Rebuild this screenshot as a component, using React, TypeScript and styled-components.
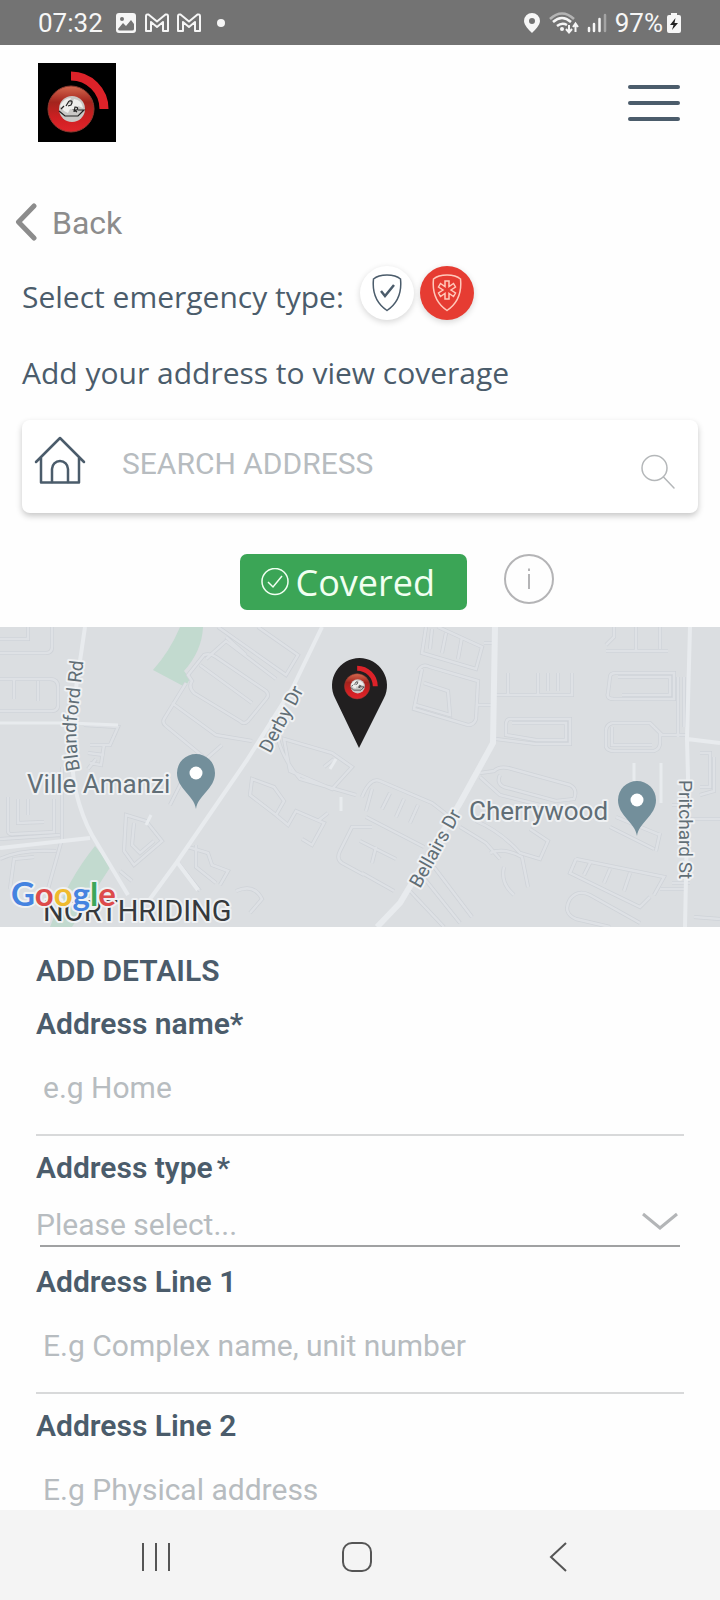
import React from "react";
import styled, { createGlobalStyle } from "styled-components";

const GlobalStyle = createGlobalStyle`
  *, *::before, *::after { box-sizing: border-box; }
  body { margin: 0; background: #fefefe; }
  button, input, select { font: inherit; color: inherit; }
  button { margin: 0; padding: 0; border: 0; background: none; cursor: pointer; }
  svg { display: block; flex: none; }
`;

const SLATE = "#4b5c6b";
const HINT = "#b7bcc0";

const Screen = styled.div`
  display: flex;
  flex-direction: column;
  height: 100vh;
  background: #fefefe;
  font-family: Roboto, "Liberation Sans", sans-serif;
  color: ${SLATE};
`;

const StatusBar = styled.div`
  flex: none;
  display: flex;
  align-items: center;
  justify-content: space-between;
  height: 45px;
  padding: 0 38px;
  background: #737373;
  color: #f6f6f6;
  font-size: 26px;
  line-height: 30px;
`;

const StatusGroup = styled.div<{ $gap: number }>`
  display: flex;
  align-items: center;
  gap: ${(p) => p.$gap}px;
`;

const Clock = styled.span`
  margin-right: 4px;
`;

const Content = styled.main`
  flex: 1;
  min-height: 0;
  overflow-y: auto;
  scrollbar-width: none;
`;

const Header = styled.header`
  display: flex;
  align-items: center;
  justify-content: space-between;
  padding: 18px 40px 0 38px;
`;

const MenuButton = styled.button`
  display: flex;
  flex-direction: column;
  gap: 12px;
  width: 52px;
`;

const MenuLine = styled.span`
  height: 4px;
  border-radius: 2px;
  background: ${SLATE};
`;

const BackLink = styled.a`
  display: inline-flex;
  align-items: center;
  gap: 15px;
  margin: 58px 0 0 15px;
  color: #8c8c8c;
  font-size: 32px;
  line-height: 40px;
  text-decoration: none;
`;

const BackText = styled.span`
  padding-top: 3px;
`;

const Intro = styled.section`
  padding: 20px 22px 0;
  font-family: "Open Sans", "Noto Sans", sans-serif;
  font-size: 30px;
  line-height: 40px;
`;

const TypeRow = styled.div`
  display: flex;
  align-items: flex-start;
  gap: 6px;
`;

const TypeLabel = styled.span`
  padding: 11px 10px 0 0;
`;

const TypeButton = styled.button<{ $active?: boolean }>`
  display: flex;
  align-items: center;
  justify-content: center;
  width: 54px;
  height: 54px;
  border-radius: 50%;
  background: ${(p) => (p.$active ? "#e63c32" : "#fff")};
  color: ${(p) => (p.$active ? "#ffc9bb" : SLATE)};
  box-shadow: 0 2px 6px rgba(0, 0, 0, 0.16);
`;

const Paragraph = styled.p`
  margin: 33px 0 0;
`;

const SearchBox = styled.form`
  display: flex;
  align-items: center;
  height: 93px;
  margin: 27px 22px 0;
  padding: 0 22px 12px 12px;
  border-radius: 8px;
  background: #fff;
  box-shadow: 0 3px 6px rgba(0, 0, 0, 0.22);
`;

const SearchInput = styled.input`
  flex: 1;
  min-width: 0;
  height: 48px;
  margin: 6px 0 0 36px;
  padding: 0;
  border: 0;
  outline: 0;
  background: transparent;
  font-size: 30px;
  &::placeholder { color: ${HINT}; opacity: 1; }
`;

const SearchButton = styled.button`
  margin-top: 24px;
`;

const CoverageRow = styled.div`
  display: flex;
  justify-content: center;
  align-items: flex-start;
  gap: 36px;
  padding: 41px 0 17px 74px;
`;

const CoveredBadge = styled.button`
  display: flex;
  align-items: center;
  gap: 6px;
  width: 227px;
  height: 56px;
  padding: 2px 0 0 20px;
  border-radius: 7px;
  background: #3ba556;
  color: #f1fff1;
  font-family: "Open Sans", "Noto Sans", sans-serif;
  font-size: 36px;
  line-height: 48px;
`;

const MapPanel = styled.section`
  height: 300px;
  background: #dbdee1;
  & > svg { width: 100%; height: 100%; }
`;

const MapText = styled.text<{ $size: number; $color?: string }>`
  font-size: ${(p) => p.$size}px;
  fill: ${(p) => p.$color || "#616e76"};
  stroke: #eff1f3;
  stroke-width: 4px;
  stroke-linejoin: round;
  paint-order: stroke;
`;

const GoogleMark = styled(MapText)`
  font-family: Lato, sans-serif;
  font-weight: 700;
`;

const Details = styled.form`
  display: flex;
  flex-direction: column;
  gap: 14px;
  padding: 26px 36px 0;
  font-size: 30px;
  line-height: 36px;
`;

const Title = styled.h2`
  margin: 0 0 3px;
  font-size: 30px;
  font-weight: 600;
  line-height: 36px;
`;

const Field = styled.div`
  display: flex;
  flex-direction: column;
`;

const Label = styled.label`
  font-weight: 600;
`;

const Star = styled.span`
  margin-left: 4px;
  font-weight: 500;
`;

const TextInput = styled.input`
  width: 100%;
  height: 94px;
  padding: 0 7px;
  border: 0;
  border-bottom: 2px solid #d8d9da;
  border-radius: 0;
  outline: 0;
  background: transparent;
  &::placeholder { color: ${HINT}; opacity: 1; }
`;

const SelectWrap = styled.div`
  display: flex;
  align-items: center;
  height: 61px;
  margin-bottom: 3px;
  padding: 12px 6px 0 0;
  background: linear-gradient(#a0a1a2, #a0a1a2) center bottom / calc(100% - 8px) 2px no-repeat;
`;

const Select = styled.select`
  flex: 1;
  height: 44px;
  padding: 6px 0 0;
  border: 0;
  outline: 0;
  appearance: none;
  background: transparent;
  color: ${HINT};
`;

const NavBar = styled.nav`
  flex: none;
  display: flex;
  align-items: center;
  justify-content: space-around;
  height: 90px;
  padding: 4px 62px 0 56px;
  background: #f4f4f4;
`;

const NavButton = styled.button`
  display: flex;
  justify-content: center;
  width: 60px;
`;

function BrandMark() {
  return (
    <>
      <path d="M33 13 A33 33 0 0 1 66 46" fill="none" stroke="#dc2229" strokeWidth="9" />
      <circle cx="33" cy="46" r="23" fill="url(#ring)" stroke="#8e3a30" strokeWidth="1" />
      <circle cx="34" cy="46" r="13" fill="#c9c8c6" />
      <path d="M22 43 q4 -8 11 -8 l-3 6 4 -1 2 -4 q8 1 9 9 l-5 -2 -3 4 -5 -1 -2 4 -4 -2z" fill="#eeeeec" />
      <path d="M21 48 l6 5 h13 l6 -6 h-6 M31 38 l-3 5 M31 38 q5 -1 2 4 l-3 1 M36 49 l1 -5 q4 0 2 3 l-3 0 3 2 M23 46 l3 -3" fill="none" stroke="#222" strokeWidth="1.200" />
    </>
  );
}

function Gradients() {
  return (
    <defs>
      <linearGradient id="ring" x1="0" y1="0" x2="0" y2="1">
        <stop offset="0" stopColor="#d5694f" />
        <stop offset="0.35" stopColor="#a3241d" />
        <stop offset="0.7" stopColor="#cf1f22" />
        <stop offset="1" stopColor="#e0252b" />
      </linearGradient>
    </defs>
  );
}

function MailIcon() {
  return (
    <svg width="24" height="20" viewBox="0 0 24 20" fill="none" stroke="#f6f6f6" strokeWidth="2" strokeLinejoin="round">
      <path d="M1 18 V3 Q1 1 3.500 1.500 L12 8.500 L20.500 1.500 Q23 1 23 3 V18 H18 V9 L12 14 L6 9 V18 Z" />
    </svg>
  );
}

const SHIELD = "M15 1 C20 1 25 2 28.500 5 C30 19 26 29 15 36.500 C4 29 0 19 1.500 5 C5 2 10 1 15 1 Z";

const MINOR = [
  "M0 12 H28 V0 M52 0 V20 Q52 26 46 26 H0 M0 52 H50 Q58 52 58 60 V78 Q58 84 52 84 H0 M14 52 V72 M38 54 V74",
  "M8 170 V204 Q8 208 14 207 L54 205 V172 M18 172 V196 L44 195 M28 172 V188 M62 140 V212 L48 262 M0 232 Q20 222 56 224 M10 262 L14 232 L34 230 M0 212 L60 208",
  "M84 98 L118 100 L110 118 H90 M104 118 L101 138 L90 136 M88 126 L104 128 M96 132 L88 142",
  "M126 188 L124 224 L134 238 L162 214 L146 194 Z M134 196 L132 218 L140 226 L154 214 M120 244 L132 254 M170 178 L184 150",
  "M186 56 L164 92 Q162 96 166 99 L206 132 L222 118 M172 76 L216 108 L252 114 M206 132 L186 148 M188 48 L204 28 Q210 26 216 30 L266 64 Q270 68 266 72 L248 94 Q244 98 240 94 L194 66 Q188 60 192 54 Z",
  "M218 0 L286 48 L298 28 L258 0 M206 32 L226 14 L276 52 M200 38 L252 76 M226 10 L246 28",
  "M284 112 L332 126 L352 140 L332 162 L290 144 Z M278 112 Q284 134 300 152 L356 168 M324 140 L334 132 M252 152 L250 168 L276 188 L284 174 L274 160 Z M276 188 L288 198 L296 184 L324 196 L312 218 L302 212 M318 194 L328 186",
  "M340 224 L352 200 H372 M340 224 Q336 232 342 236 L364 248 M188 220 L208 226 L212 238 L228 244 L220 258 M178 236 L200 264 M196 218 V240 L216 256 M236 264 Q254 256 262 272 L250 286",
  "M362 170 Q370 150 380 154 L432 176 L450 190 M366 190 L424 220 M372 162 L366 184 M390 166 L382 182 M404 172 L396 190 M418 178 L410 196 M360 214 L396 232 M376 220 L372 236 M362 246 L394 264 M420 246 L460 296 M434 240 L472 290 M410 264 L444 300",
  "M426 0 L422 26 L476 42 L482 20 L438 0 M432 2 L430 22 M446 6 L442 26 M462 10 L458 32 M418 44 Q422 36 430 40 L478 54 L476 92 Q474 98 468 98 L414 82 L422 42 M424 56 L448 64 L450 88 L416 78 M476 78 H494 M484 16 H494",
  "M496 68 H572 V46 M508 46 V68 M538 46 V68 M548 46 V64 M558 46 V64 M496 112 L536 117 H570 V92 H510 Q506 92 506 98 V108 L536 113 H566 V96 H512",
  "M606 24 H668 M636 0 V24 M660 0 V22 M614 0 V10 L606 18 M616 46 H674 V72 H614 Q606 72 608 66 L610 50 Q610 46 616 46 M618 50 H670 V68 H622 M612 96 H650 L662 108 H686 M612 96 Q606 98 606 104 V120 Q608 124 614 124 H654 Q660 122 660 116 V106 M612 100 V118 H652 M678 50 V110 M684 50 V100",
  "M480 146 L494 144 Q500 138 512 142 L570 158 Q578 162 574 172 L556 174 L504 160 Q496 156 500 148 M480 150 L500 168 L540 178 M460 200 Q470 206 486 216 L500 232 M476 194 Q500 204 520 226 L540 232 L548 214 L530 202",
  "M576 232 L570 246 L640 280 L650 270 M576 232 L664 250 L654 268 M590 236 L584 248 M610 242 L604 256 M630 246 L624 264 M610 200 L654 222 M660 206 L656 224 M616 190 L660 208 M570 272 Q578 262 590 268 L640 296 M570 272 Q562 286 576 292 L610 300",
  "M700 126 H710 V160 H700 M714 130 V164 L700 168 M690 192 H720 M672 178 H690 M672 256 H690 M660 262 H686 M694 290 L720 292 M490 226 Q504 220 522 230 L528 260 M504 240 Q500 256 514 268",
];

function PlacePin({ x, y }: { x: number; y: number }) {
  return (
    <g transform={`translate(${x} ${y})`}>
      <path d="M0 36 C-2 22 -19 16 -19 0 A19 19 0 0 1 19 0 C19 16 2 22 0 36 Z" fill="#738f9b" />
      <circle r="6.500" fill="#fff" />
    </g>
  );
}

function AreaMap() {
  return (
    <MapPanel aria-label="Map of the address">
      <svg viewBox="0 0 720 300" preserveAspectRatio="xMidYMid slice">
        <path d="M180 0 H203 Q202 24 184 44 L190 52 L185 60 L153 43 Q170 24 180 0 Z" fill="#c2dacf" />
        <path d="M95 219 L111 239 Q96 262 72 300 H50 Q68 252 95 219 Z" fill="#c2dacf" />
        <g fill="none" stroke="#cfd3d8" strokeWidth="4">
          {MINOR.map((d) => <path key={d} d={d} />)}
        </g>
        <g fill="none" stroke="#dee1e5" strokeWidth="2.500">
          {MINOR.map((d) => <path key={d} d={d} />)}
        </g>
        <g fill="none" stroke="#e8ebee" strokeWidth="4" strokeLinejoin="round">
          <path d="M85 0 L80 34 Q66 120 76 165 Q82 190 92 208 L128 268 M0 221 L90 211" />
          <path d="M0 96 H70 L118 98" strokeWidth="3" />
          <path d="M322 0 L293 60 L247 133 L177 235 L150 272 M177 235 L198 263" />
          <path d="M690 0 L687 112 L688 150 L685 300 M687 112 L720 116" />
          <path d="M146 198 L151 188 M330 142 L336 132 M341 170 V184 M634 136 V156 M661 136 V176" strokeWidth="3" />
        </g>
        <path d="M495 0 L493 116 L460 176 L400 276 L377 300" fill="none" stroke="#e8ebee" strokeWidth="6" />

        <path id="blandford" d="M80 143 Q74 112 78 84 L84 30" fill="none" />
        <MapText $size={19}><textPath href="#blandford">Blandford Rd</textPath></MapText>
        <MapText $size={19} transform="translate(270 127) rotate(-62)">Derby Dr</MapText>
        <MapText $size={19} transform="translate(420 262) rotate(-61)">Bellairs Dr</MapText>
        <MapText $size={19} transform="translate(679 153) rotate(90)">Pritchard St</MapText>
        <MapText $size={26} x="27" y="166">Ville Amanzi</MapText>
        <MapText $size={26} x="469" y="193">Cherrywood</MapText>
        <MapText $size={29} $color="#36393c" x="43" y="294">NORTHRIDING</MapText>
        <GoogleMark $size={33} x="11" y="279">
          <tspan fill="#4583e0">G</tspan>
          <tspan fill="#dd4b4b">o</tspan>
          <tspan fill="#efba2e">o</tspan>
          <tspan fill="#4583e0">g</tspan>
          <tspan fill="#3da658">l</tspan>
          <tspan fill="#dd4b4b">e</tspan>
        </GoogleMark>

        <PlacePin x={196} y={146} />
        <PlacePin x={637} y={173} />
        <path d="M359 121 L335 71 A27.500 27.500 0 1 1 384 71 Z" fill="#211f20" />
        <g transform="translate(339 34) scale(0.550)"><BrandMark /></g>
      </svg>
    </MapPanel>
  );
}

export default function App() {
  return (
    <Screen>
      <GlobalStyle />
      <StatusBar>
        <StatusGroup $gap={8}>
          <Clock>07:32</Clock>
          <svg width="22" height="22" viewBox="0 0 22 22">
            <rect x="1" y="1" width="20" height="20" rx="3" fill="#f6f6f6" />
            <circle cx="7" cy="7" r="2" fill="#737373" />
            <path d="M3 17 L8 11 L11 14 L16 8 L19 12 V17 Q19 18.500 17 18.500 H5 Q3 18.500 3 17Z" fill="#737373" />
          </svg>
          <MailIcon />
          <MailIcon />
          <svg width="24" height="10" viewBox="0 0 24 10"><circle cx="12" cy="5" r="4" fill="#f6f6f6" /></svg>
        </StatusGroup>
        <StatusGroup $gap={8}>
          <svg width="18" height="22" viewBox="0 0 18 22">
            <path fillRule="evenodd" fill="#f6f6f6" d="M9 1 A8 8 0 0 1 17 9 C17 13 12 18 9 21 C6 18 1 13 1 9 A8 8 0 0 1 9 1 Z M9 6 A3 3 0 1 0 9 12 A3 3 0 1 0 9 6 Z" />
          </svg>
          <svg width="30" height="24" viewBox="0 0 30 24" fill="none" stroke="#f6f6f6" strokeWidth="2.500">
            <path d="M1 8 Q13 -3 25 8" stroke="#b4b4b4" />
            <path d="M4 11 Q13 3 22 11 M8 15 Q13 11 18 14" />
            <circle cx="13" cy="18" r="2" fill="#f6f6f6" stroke="none" />
            <path d="M20 14 V21 M17 18 L20 21.500 L23 18 M26.500 21 V13 M24 16 L26.500 12.500 L29 16" strokeWidth="2" />
          </svg>
          <svg width="20" height="20" viewBox="0 0 20 20" strokeWidth="2.500" strokeLinecap="round">
            <path d="M2 15 V18 M7 11 V18 M12.500 6 V18" stroke="#f6f6f6" />
            <path d="M18 2 V18" stroke="#a4a4a4" />
          </svg>
          <StatusGroup $gap={3}>
            <span>97%</span>
            <svg width="16" height="22" viewBox="0 0 16 22">
              <path d="M5 1 H11 V3 H13 Q15 3 15 5 V19 Q15 21 13 21 H3 Q1 21 1 19 V5 Q1 3 3 3 H5 Z" fill="#f6f6f6" />
              <path d="M9.500 6 L4 13 H7.500 L6 18 L12 11 H8.500 Z" fill="#222" />
            </svg>
          </StatusGroup>
        </StatusGroup>
      </StatusBar>

      <Content>
        <Header>
          <svg width="78" height="79" viewBox="0 0 78 79" role="img" aria-label="Logo">
            <Gradients />
            <rect width="78" height="79" fill="#000" />
            <BrandMark />
          </svg>
          <MenuButton type="button" aria-label="Menu">
            <MenuLine />
            <MenuLine />
            <MenuLine />
          </MenuButton>
        </Header>

        <BackLink href="#back">
          <svg width="22" height="40" viewBox="0 0 22 40" fill="none" stroke="#8c8c8c" strokeWidth="5" strokeLinecap="round" strokeLinejoin="round">
            <path d="M19 4 L3.500 20 L19 36" />
          </svg>
          <BackText>Back</BackText>
        </BackLink>

        <Intro>
          <TypeRow>
            <TypeLabel>Select emergency type:</TypeLabel>
            <TypeButton type="button" aria-label="Security">
              <svg width="30" height="38" viewBox="0 0 30 38" fill="none" stroke="currentColor" strokeWidth="1.500">
                <path d={SHIELD} />
                <path d="M9 17 L13 22 L22 11" strokeWidth="2.500" />
              </svg>
            </TypeButton>
            <TypeButton type="button" $active aria-label="Medical">
              <svg width="30" height="38" viewBox="0 0 30 38" fill="none" stroke="currentColor" strokeWidth="1.500">
                <path d={SHIELD} />
                <path d="M13 7 H17 V12.500 L21.500 9.500 L23.500 13 L19 16 L23.500 19 L21.500 22.500 L17 19.500 V25 H13 V19.500 L8.500 22.500 L6.500 19 L11 16 L6.500 13 L8.500 9.500 L13 12.500 Z" />
              </svg>
            </TypeButton>
          </TypeRow>
          <Paragraph>Add your address to view coverage</Paragraph>
        </Intro>

        <SearchBox onSubmit={(e) => e.preventDefault()}>
          <svg width="52" height="48" viewBox="0 0 52 48" fill="none" stroke={SLATE} strokeWidth="2.500" strokeLinejoin="round" strokeLinecap="round">
            <path d="M2 26 L26 2 L50 26 M7 22 V46.500 H45 V22" />
            <path d="M18 46 V33 A8 8 0 0 1 34 33 V46" />
          </svg>
          <SearchInput type="text" aria-label="Search address" placeholder="SEARCH ADDRESS" />
          <SearchButton type="submit" aria-label="Search">
            <svg width="36" height="36" viewBox="0 0 36 36" fill="none" stroke="#b4b7b9" strokeWidth="1.500" strokeLinecap="round">
              <circle cx="14.500" cy="14" r="12.500" />
              <path d="M23.500 23 L34 34" />
            </svg>
          </SearchButton>
        </SearchBox>

        <CoverageRow>
          <CoveredBadge type="button">
            <svg width="30" height="30" viewBox="0 0 30 30" fill="none" stroke="#f1fff1" strokeWidth="1.500">
              <circle cx="15" cy="13.500" r="13" />
              <path d="M8 14 L13 19 L22 8" />
            </svg>
            Covered
          </CoveredBadge>
          <button type="button" aria-label="Coverage information">
            <svg width="52" height="52" viewBox="0 0 52 52" fill="none" stroke="#b4b4b6" strokeWidth="2">
              <circle cx="26" cy="25" r="24" />
              <path d="M26 20 V35 M26 14.500 V17" />
            </svg>
          </button>
        </CoverageRow>

        <AreaMap />

        <Details onSubmit={(e) => e.preventDefault()}>
          <Title>ADD DETAILS</Title>
          <Field>
            <Label htmlFor="name">Address name*</Label>
            <TextInput id="name" placeholder="e.g Home" />
          </Field>
          <Field>
            <Label htmlFor="type">Address type<Star>*</Star></Label>
            <SelectWrap>
              <Select id="type" defaultValue="">
                <option value="">Please select...</option>
              </Select>
              <svg width="36" height="20" viewBox="0 0 36 20" fill="none" stroke="#b3b5b7" strokeWidth="3">
                <path d="M1 2 L18 16 L35 2" />
              </svg>
            </SelectWrap>
          </Field>
          <Field>
            <Label htmlFor="line1">Address Line 1</Label>
            <TextInput id="line1" placeholder="E.g Complex name, unit number" />
          </Field>
          <Field>
            <Label htmlFor="line2">Address Line 2</Label>
            <TextInput id="line2" placeholder="E.g Physical address" />
          </Field>
        </Details>
      </Content>

      <NavBar>
        <NavButton type="button" aria-label="Recent apps">
          <svg width="30" height="30" viewBox="0 0 30 30" stroke="#555" strokeWidth="2">
            <path d="M2 1 V29 M15 1 V29 M28 1 V29" />
          </svg>
        </NavButton>
        <NavButton type="button" aria-label="Home">
          <svg width="30" height="30" viewBox="0 0 30 30" fill="none" stroke="#555" strokeWidth="2">
            <rect x="1" y="1" width="28" height="28" rx="9" />
          </svg>
        </NavButton>
        <NavButton type="button" aria-label="Back">
          <svg width="18" height="30" viewBox="0 0 18 30" fill="none" stroke="#555" strokeWidth="2">
            <path d="M17 1 L2 15 L17 29" />
          </svg>
        </NavButton>
      </NavBar>
    </Screen>
  );
}
